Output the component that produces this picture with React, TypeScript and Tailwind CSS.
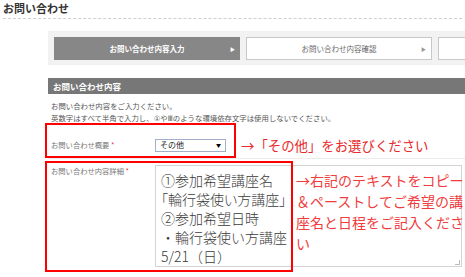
const jp = "font-['Noto_Sans_CJK_JP','Noto_Sans',sans-serif]";

function Step({ label, active }: { label: string; active?: boolean }) {
  return (
    <div
      className={
        'relative flex items-center justify-center w-[186px] h-[23px] shrink-0 text-[7.5px] ' +
        (active ? 'bg-[#878787] text-white font-bold' : 'bg-white border border-[#c8c8c8] text-[#666]')
      }
    >
      {label}
      {label && (
        <span className={'absolute right-[5px] text-[5px] ' + (active ? 'text-white' : 'text-[#999]')}>▶</span>
      )}
    </div>
  );
}

export default function App() {
  return (
    <div className={`relative w-[465px] h-[277px] overflow-hidden bg-white ${jp}`}>
      {/* Page title */}
      <div className="px-[3px] pt-[1px]">
        <h1 className="text-[11px] font-bold text-[#333] leading-[15px]">お問い合わせ</h1>
        <div className="mt-[2px] border-t border-dashed border-[#cfcfcf]" />
      </div>

      <div className="ml-[48px] w-[560px] mt-[12px]">
        {/* Steps */}
        <div className="flex gap-[6px] bg-[#f2f2f2] p-[6px] h-[34px]">
          <Step label="お問い合わせ内容入力" active />
          <Step label="お問い合わせ内容確認" />
          <Step label="" />
        </div>

        {/* Section header */}
        <div className="mt-[13px] h-[16px] bg-[#777] text-white font-bold text-[8.5px] leading-[16px] pl-[5px]">
          お問い合わせ内容
        </div>

        {/* Intro */}
        <div className="pl-[3px] pt-[6px] text-[7.4px] leading-[12px] text-[#555]">
          <p>お問い合わせ内容をご入力ください。</p>
          <p>
            英数字はすべて半角で入力し、
            <span className="font-['DejaVu_Sans','Noto_Sans_CJK_JP',sans-serif]">①</span>や
            <span className="font-['DejaVu_Sans','Noto_Sans_CJK_JP',sans-serif]">Ⅲ</span>
            のような環境依存文字は使用しないでください。
          </p>
        </div>

        {/* Rows */}
        <div className="mt-[7px]">
          <div className="flex items-center h-[27px] border-b border-[#ececec]">
            <div className="w-[107px] pl-[3px] text-[7.3px] text-[#777]">
              お問い合わせ概要 <span className="text-[#e33]">*</span>
            </div>
            <div className="flex items-center justify-between w-[71px] h-[13px] border border-[#9fb0c8] px-[4px] text-[8px] text-[#222]">
              <span>その他</span>
              <span className="text-[5px] text-black">▼</span>
            </div>
          </div>
          <div className="flex pt-[6px] h-[113px]">
            <div className="w-[107px] pl-[3px] text-[7.3px] text-[#777] leading-[12px]">
              お問い合わせ内容詳細 <span className="text-[#e33]">*</span>
            </div>
            <div className="relative w-[307px] h-[102px] border border-[#d4d4d4] pl-[5px] pt-[5px] text-[14px] font-light leading-[19px] text-[#3a3a3a]">
              <p>①参加希望講座名</p>
              <p className="[font-feature-settings:'palt']">「輪行袋使い方講座」</p>
              <p>②参加希望日時</p>
              <p>・輪行袋使い方講座</p>
              <p>5/21（日）</p>
              <span className="absolute right-[1px] bottom-[1px] w-[5px] h-[5px] border-r border-b border-[#bbb]" />
            </div>
          </div>
        </div>
      </div>

      {/* Annotations */}
      <div className="absolute left-[45px] top-[123px] w-[191px] h-[35px] border-2 border-[#f00]" />
      <div className="absolute left-[241px] top-[135px] text-[13.4px] leading-[20px] text-[#e8282a] whitespace-nowrap">
        →「その他」をお選びください
      </div>
      <div className="absolute left-[45px] top-[161px] w-[248px] h-[111px] border-2 border-[#f00]" />
      <div className="absolute left-[296px] top-[170px] w-[172px] text-[14px] leading-[21px] text-[#f03c3c]">
        →右記のテキストをコピー＆ペーストしてご希望の講座名と日程をご記入ください
      </div>
    </div>
  );
}
